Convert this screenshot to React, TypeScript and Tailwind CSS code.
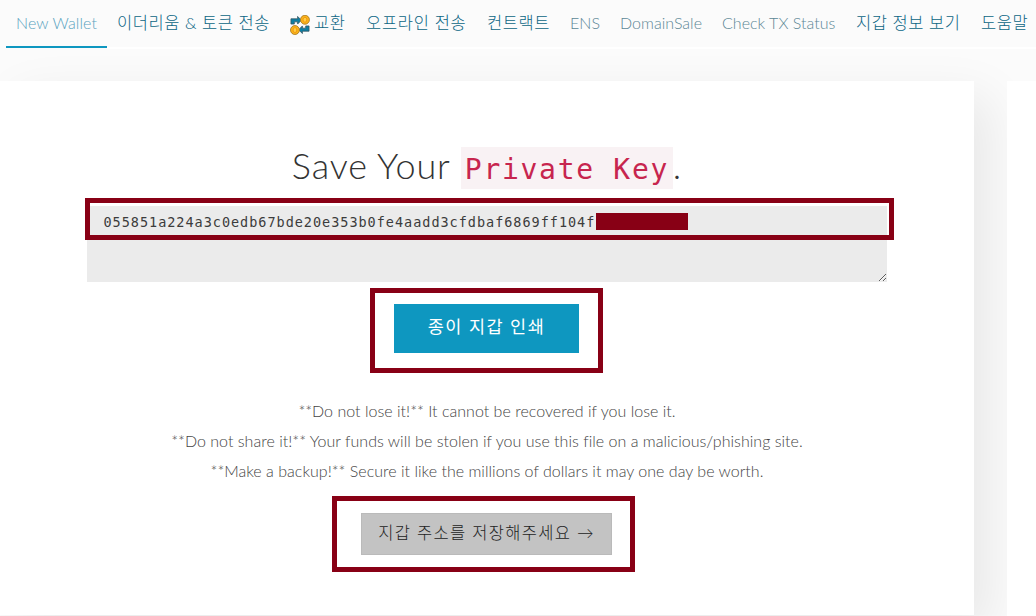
import type { ReactNode } from "react";
import { clsx } from "clsx";

type NavItem = {
  label: string;
  width: string;
  text: string;
  active?: boolean;
  icon?: boolean;
};

const latin = "pt-[11px] text-[16px] tracking-[0.02px] text-[#5c8796]";
const korean = "pt-[11px] text-[16.5px] tracking-[0.55px] text-[#0b6584]";

const navItems: NavItem[] = [
  { label: "New Wallet", width: "w-[101px]", text: "pt-[12px] text-[16px] tracking-[0.1px] text-[#5aa3bf]", active: true },
  { label: "이더리움 & 토큰 전송", width: "w-[172px]", text: korean },
  { label: "교환", width: "w-[77px]", text: korean, icon: true },
  { label: "오프라인 전송", width: "w-[121px]", text: "pt-[11px] text-[16.5px] tracking-[0.7px] text-[#0b6584]" },
  { label: "컨트랙트", width: "w-[83px]", text: korean },
  { label: "ENS", width: "w-[50px]", text: latin },
  { label: "DomainSale", width: "w-[102px]", text: latin },
  { label: "Check TX Status", width: "w-[134px]", text: latin },
  { label: "지갑 정보 보기", width: "w-[125px]", text: korean },
  { label: "도움말", width: "w-[80px]", text: korean },
];

const warnings = [
  "**Do not lose it!** It cannot be recovered if you lose it.",
  "**Do not share it!** Your funds will be stolen if you use this file on a malicious/phishing site.",
  "**Make a backup!** Secure it like the millions of dollars it may one day be worth.",
];

function SwapIcon() {
  return (
    <svg width="20" height="20" viewBox="0 0 21 21" className="mt-[3px] mr-[4px] ml-px shrink-0">
      <path d="M1 9.5V4h7V1.5L12 5.5 8 9.5V7.2H4.5v2.3z" fill="#0c7fa4" stroke="#35535d" strokeWidth=".8" />
      <path d="M20 11.5V17h-7v2.5L9 15.5l4-4v2.3h3.5v-2.3z" fill="#0c7fa4" stroke="#35535d" strokeWidth=".8" />
      <circle cx="15.7" cy="5" r="4.7" fill="#fbb416" stroke="#a77a2b" strokeWidth=".9" />
      <ellipse cx="15.7" cy="5" rx="2" ry="2.6" fill="#ffd03f" stroke="#ee9417" />
      <circle cx="5.2" cy="15.8" r="4.7" fill="#fbb416" stroke="#a77a2b" strokeWidth=".9" />
      <ellipse cx="5.2" cy="15.8" rx="2" ry="2.6" fill="#ffd03f" stroke="#ee9417" />
    </svg>
  );
}

function NavBar() {
  return (
    <nav className="flex h-12 pl-[6px]">
      {navItems.map((item) => (
        <a
          key={item.label}
          className={clsx(
            "flex h-12 shrink-0 items-start border-b-2 pl-[10px] leading-[22px] whitespace-nowrap",
            item.width,
            item.text,
            item.active ? "border-[#0e97c0]" : "mt-px border-white",
          )}
        >
          {item.icon && <SwapIcon />}
          {item.label}
        </a>
      ))}
    </nav>
  );
}

function Highlight({ className, children }: { className: string; children: ReactNode }) {
  return (
    <div className={clsx("flex shrink-0 items-start border-[5px] border-[#880015]", className)}>{children}</div>
  );
}

function PrivateKeyField() {
  return (
    <div className="relative mt-[17px] h-[76px] w-[800px] shrink-0">
      <textarea
        readOnly
        defaultValue="055851a224a3c0edb67bde20e353b0fe4aadd3cfdbaf6869ff104f"
        className="block h-[76px] w-[800px] resize bg-[#ebebeb] pt-[5px] pl-[16.5px] font-['DejaVu_Sans_Mono',monospace] text-[13.5px] leading-[22px] font-normal tracking-[0.98px] text-[#3c3c3c] outline-none"
      />
      {/* redacted end of the key */}
      <div className="absolute top-[7px] left-[509px] h-[17px] w-[92px] bg-[#880015]" />
      <div className="absolute -top-[8px] -left-[2px] h-[42px] w-[809px] border-[5px] border-[#880015]">
        <div className="h-[3px] bg-white" />
      </div>
    </div>
  );
}

function WalletPanel() {
  return (
    <main className="flex h-[534px] w-[974px] shrink-0 flex-col items-center bg-white shadow-[16px_16px_47px_0_rgba(0,0,0,0.08)]">
      <h1 className="mt-[66px] flex h-[42px] items-start text-[36px] leading-[37px] font-light tracking-[0.85px] whitespace-nowrap text-[#333]">
        <span className="w-[169px]">Save Your</span>
        <code className="h-[42px] w-[212px] bg-[#f9f2f4] pl-1 font-['DejaVu_Sans_Mono',monospace] text-[28px] leading-[45px] tracking-[1.7px] text-[#c7254e]">
          Private Key
        </code>
        <span>.</span>
      </h1>

      <PrivateKeyField />

      <Highlight className="mt-[6px] -ml-px h-[85px] w-[233px] pt-[11px] pl-[19px]">
        <button className="h-[49px] w-[185px] bg-[#0e97c0] pb-[3px] text-[17.5px] leading-[44px] font-normal tracking-[1.5px] text-white">
          종이 지갑 인쇄
        </button>
      </Highlight>

      <div className="mt-[23px] text-center text-[16px] leading-[30px] font-light tracking-[0.02px] text-[#444]">
        {warnings.map((warning) => (
          <p key={warning}>{warning}</p>
        ))}
      </div>

      <Highlight className="mt-[10px] -ml-[7px] h-[76px] w-[303px] pt-[12px] pl-[24px]">
        <button className="h-[42px] w-[251px] border border-[#bababa] bg-[#c3c3c3] pb-[2px] text-[16.5px] leading-[36px] tracking-[1.3px] whitespace-nowrap text-[#222]">
          지갑 주소를 저장해주세요 →
        </button>
      </Highlight>
    </main>
  );
}

export default function App() {
  return (
    <div className="h-[616px] w-[1036px] overflow-hidden bg-[#fbfbfb] font-['Lato','Noto_Sans_CJK_KR',sans-serif] font-light">
      <NavBar />
      <div className="mt-[33px] flex gap-[33px]">
        <WalletPanel />
        <aside className="relative h-[600px] w-[300px] shrink-0 bg-white" />
      </div>
    </div>
  );
}
